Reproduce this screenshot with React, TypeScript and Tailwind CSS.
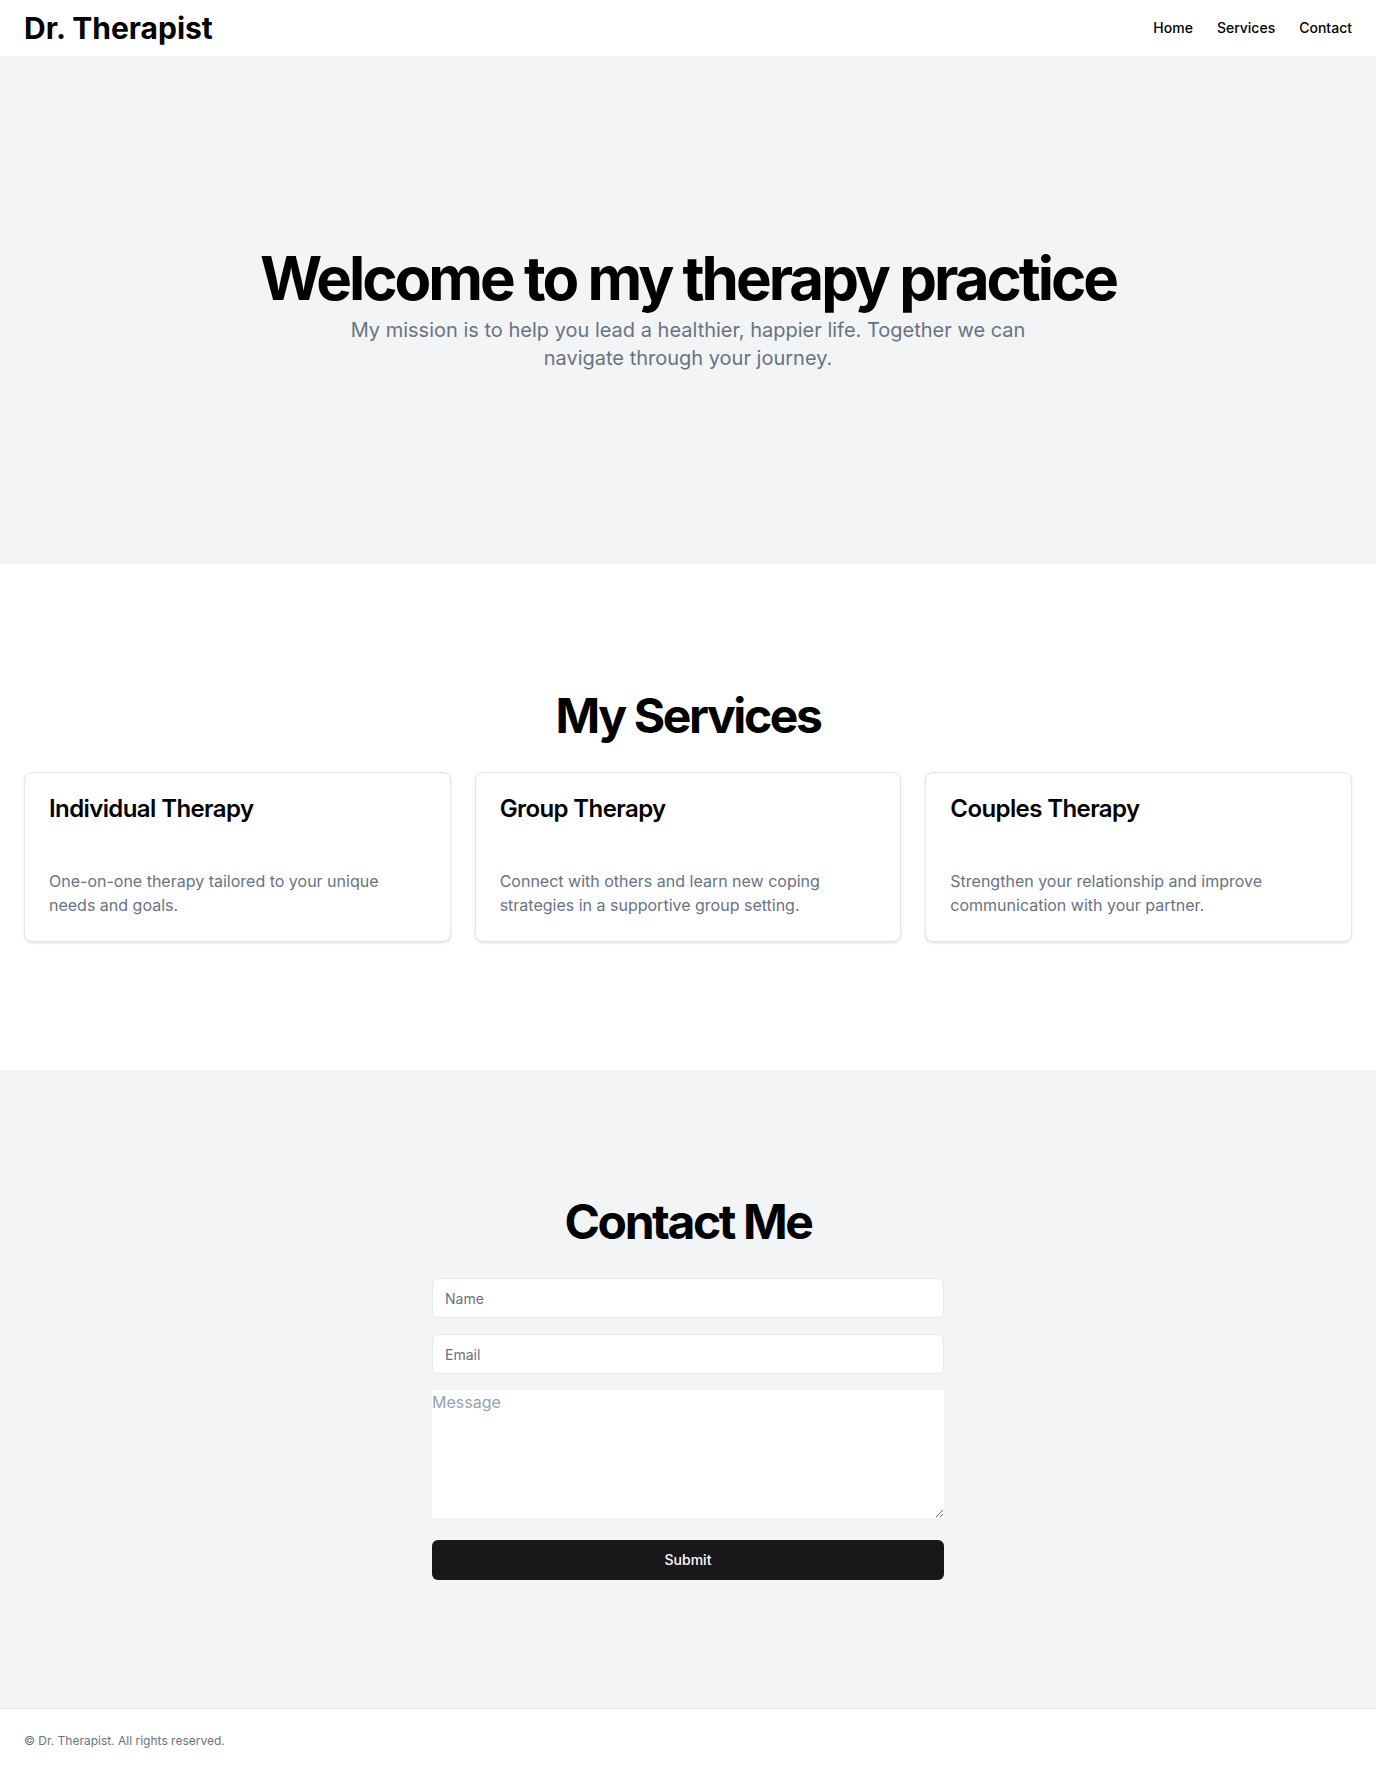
const services = [
  {
    title: "Individual Therapy",
    text: "One-on-one therapy tailored to your unique needs and goals.",
  },
  {
    title: "Group Therapy",
    text: "Connect with others and learn new coping strategies in a supportive group setting.",
  },
  {
    title: "Couples Therapy",
    text: "Strengthen your relationship and improve communication with your partner.",
  },
];

export default function App() {
  return (
    <div className="min-h-screen bg-white text-black font-['Inter',sans-serif]">
      <header className="flex h-14 items-center justify-between px-6">
        <a href="#" className="text-3xl font-bold">
          Dr. Therapist
        </a>
        <nav className="flex gap-6 text-sm font-medium">
          <a href="#">Home</a>
          <a href="#">Services</a>
          <a href="#">Contact</a>
        </nav>
      </header>

      <main>
        <section className="bg-gray-100 px-6 py-48 text-center">
          <h1 className="text-6xl font-bold tracking-tighter">Welcome to my therapy practice</h1>
          <p className="mx-auto mt-2 max-w-[700px] text-xl text-gray-500">
            My mission is to help you lead a healthier, happier life. Together we can navigate through your journey.
          </p>
        </section>

        <section className="px-6 py-32">
          <h2 className="mb-8 text-center text-5xl font-bold tracking-tighter">My Services</h2>
          <div className="grid grid-cols-3 gap-6">
            {services.map((s) => (
              <div key={s.title} className="rounded-lg border border-gray-200 bg-white shadow-sm">
                <div className="p-6">
                  <h3 className="text-2xl font-semibold leading-none tracking-tight">{s.title}</h3>
                </div>
                <div className="p-6">
                  <p className="text-base text-gray-500">{s.text}</p>
                </div>
              </div>
            ))}
          </div>
        </section>

        <section className="bg-gray-100 px-6 py-32">
          <h2 className="mb-8 text-center text-5xl font-bold tracking-tighter">Contact Me</h2>
          <form className="mx-auto flex max-w-lg flex-col">
            <input
              placeholder="Name"
              className="h-10 w-full rounded-md border border-gray-200 bg-white px-3 py-2 text-sm placeholder:text-gray-500"
            />
            <input
              type="email"
              placeholder="Email"
              className="mt-4 h-10 w-full rounded-md border border-gray-200 bg-white px-3 py-2 text-sm placeholder:text-gray-500"
            />
            <textarea
              placeholder="Message"
              className="mt-4 block h-32 w-full bg-white text-base placeholder:text-gray-400"
            />
            <button
              type="submit"
              className="mt-[22px] h-10 w-full rounded-md bg-zinc-900 text-sm font-medium text-white"
            >
              Submit
            </button>
          </form>
        </section>
      </main>

      <footer className="border-t border-gray-200 px-6 py-6">
        <p className="text-xs text-gray-500">© Dr. Therapist. All rights reserved.</p>
      </footer>
    </div>
  );
}
